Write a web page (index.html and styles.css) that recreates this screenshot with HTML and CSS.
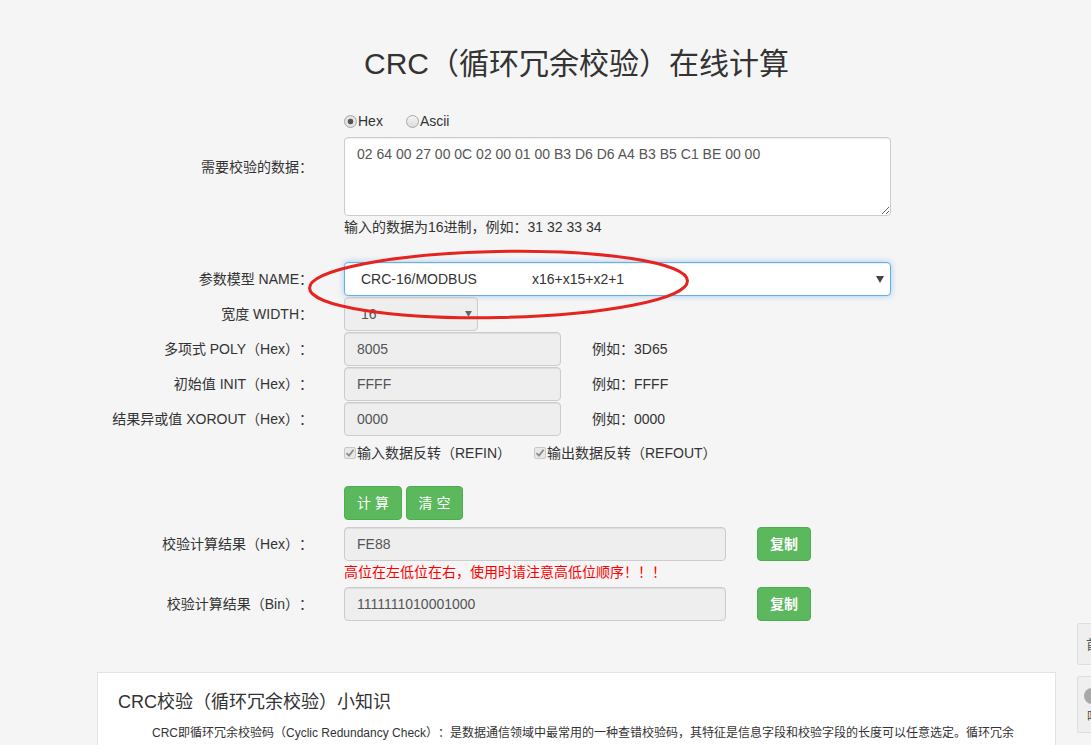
FILE: index.html
```html
<!DOCTYPE html>
<html lang="zh-CN">
<head>
<meta charset="utf-8">
<title>CRC（循环冗余校验）在线计算</title>
<link rel="stylesheet" href="styles.css">
</head>
<body>
<div class="page">
  <h1 class="title">CRC（循环冗余校验）在线计算</h1>
  <form class="form">
    <div class="row row-radio">
      <div class="label"></div>
      <div class="radios">
        <label class="radio"><input type="radio" name="fmt" checked>Hex</label>
        <label class="radio"><input type="radio" name="fmt">Ascii</label>
      </div>
    </div>
    <div class="row row-data">
      <label class="label label-top">需要校验的数据：</label>
      <div class="ctrl">
        <textarea class="input textarea">02 64 00 27 00 0C 02 00 01 00 B3 D6 D6 A4 B3 B5 C1 BE 00 00</textarea>
        <div class="help">输入的数据为16进制，例如：31 32 33 34</div>
      </div>
    </div>
    <div class="row row-name">
      <label class="label">参数模型 NAME：</label>
      <div class="select select-name">
        <span class="opt-name">CRC-16/MODBUS</span><span class="opt-poly">x16+x15+x2+1</span>
        <svg class="arrow" width="8" height="7" viewBox="0 0 8 7"><path d="M0 0H8L4 7Z" fill="#444"/></svg>
      </div>
    </div>
    <div class="row row-tight">
      <label class="label">宽度 WIDTH：</label>
      <div class="select select-width disabled">
        <span class="opt-name">16</span>
        <svg class="arrow" width="7" height="6" viewBox="0 0 8 7"><path d="M0 0H8L4 7Z" fill="#666"/></svg>
      </div>
    </div>
    <div class="row row-tight">
      <label class="label">多项式 POLY（Hex）：</label>
      <input class="input input-short" value="8005" readonly>
      <span class="example">例如：3D65</span>
    </div>
    <div class="row row-tight">
      <label class="label">初始值 INIT（Hex）：</label>
      <input class="input input-short" value="FFFF" readonly>
      <span class="example">例如：FFFF</span>
    </div>
    <div class="row row-tight">
      <label class="label">结果异或值 XOROUT（Hex）：</label>
      <input class="input input-short" value="0000" readonly>
      <span class="example">例如：0000</span>
    </div>
    <div class="row row-checks">
      <div class="label"></div>
      <label class="check"><span class="cbox"><svg width="10" height="10" viewBox="0 0 10 10"><path d="M1.5 5.2L4 7.6L8.6 1.8" fill="none" stroke="#8a8a8a" stroke-width="1.8"/></svg></span>输入数据反转（REFIN）</label>
      <label class="check check-2"><span class="cbox"><svg width="10" height="10" viewBox="0 0 10 10"><path d="M1.5 5.2L4 7.6L8.6 1.8" fill="none" stroke="#8a8a8a" stroke-width="1.8"/></svg></span>输出数据反转（REFOUT）</label>
    </div>
    <div class="row row-buttons">
      <div class="label"></div>
      <button type="button" class="btn btn-calc">计 算</button>
      <button type="button" class="btn btn-clear">清 空</button>
    </div>
    <div class="row row-result">
      <label class="label">校验计算结果（Hex）：</label>
      <input class="input input-result" value="FE88" readonly>
      <button type="button" class="btn btn-copy">复制</button>
    </div>
    <div class="row row-warn">
      <div class="label"></div>
      <div class="warn">高位在左低位在右，使用时请注意高低位顺序！！！</div>
    </div>
    <div class="row row-result2">
      <label class="label">校验计算结果（Bin）：</label>
      <input class="input input-result" value="1111111010001000" readonly>
      <button type="button" class="btn btn-copy">复制</button>
    </div>
  </form>

  <svg class="mark" width="400" height="90" viewBox="0 0 400 90">
    <ellipse cx="198.5" cy="44.5" rx="189" ry="33" transform="rotate(-1.1 198.5 44.5)" fill="none" stroke="#e52420" stroke-width="3"/>
  </svg>

  <div class="card">
    <h3 class="card-title">CRC校验（循环冗余校验）小知识</h3>
    <p class="card-text">CRC即循环冗余校验码（Cyclic Redundancy Check）：是数据通信领域中最常用的一种查错校验码，其特征是信息字段和校验字段的长度可以任意选定。循环冗余检查（CRC）是一种数据传输检错功能，对数据进行多项式计算，并将得到的结果附在帧的后面，接收设备也执行类似的算法，以保证数据传输的正确性和完整性。</p>
  </div>
</div>

<div class="side side-top">首</div>
<div class="side side-bottom"><span class="side-icon"></span><span class="side-text">吗</span></div>
</body>
</html>
```

FILE: styles.css
```css
* { box-sizing: border-box; }
html, body { margin: 0; padding: 0; }
body {
  background: #f5f5f5;
  font-family: "Liberation Sans", "Noto Sans CJK SC", sans-serif;
  font-size: 14px;
  line-height: 20px;
  color: #333;
  overflow: hidden;
  text-spacing-trim: space-all;
}
.page {
  position: relative;
  width: 959px;
  margin-left: 97px;
  padding-top: 47px;
}
.title {
  margin: 0;
  font-size: 30px;
  line-height: 33px;
  font-weight: normal;
  text-align: center;
  color: #333;
}
.form { margin-top: 31px; }
.row { display: flex; align-items: center; }
.label {
  width: 216px;
  flex: none;
  text-align: right;
  margin-right: 31px;
  color: #333;
}
.label-top { align-self: flex-start; padding-top: 20px; }
.ctrl { display: flex; flex-direction: column; }

/* radios */
.radios { display: flex; height: 20px; align-items: center; }
.radio { display: flex; align-items: center; margin-right: 23px; }
.radio input {
  appearance: none;
  -webkit-appearance: none;
  width: 13px; height: 13px;
  margin: 0 1px 0 0;
  border: 1px solid #a8a8a8;
  border-radius: 50%;
  background: linear-gradient(#f4f4f4, #dcdcdc);
  position: relative;
}
.radio input:checked {
  background: radial-gradient(circle, #555 0 2.5px, #e6e6e6 3.2px, #dadada 100%);
}

/* textarea */
.input {
  font-family: "Liberation Sans", "Noto Sans CJK SC", sans-serif;
  font-size: 14px;
  line-height: 20px;
  color: #555;
  border: 1px solid #ccc;
  border-radius: 4px;
  padding: 6px 12px;
  height: 34px;
  background: #eee;
  box-shadow: inset 0 1px 1px rgba(0,0,0,.075);
  outline: none;
}
.row-data { margin-top: 6px; }
.textarea {
  width: 547px;
  height: 79px;
  background: #fff;
  resize: vertical;
  display: block;
  margin: 0;
}
.help { margin-top: 1px; color: #333; }

/* selects */
.select {
  display: flex;
  align-items: center;
  height: 34px;
  border: 1px solid #ccc;
  border-radius: 4px;
  padding: 0 0 0 16px;
  color: #555;
  position: relative;
}
.row-name { margin-top: 25px; }
.select-name {
  width: 547px;
  background: #fff;
  border-color: #66afe9;
  box-shadow: inset 0 1px 1px rgba(0,0,0,.075), 0 0 6px rgba(102,175,233,.6);
  color: #333;
}
.opt-poly { margin-left: 55px; }
.select .arrow { margin-left: auto; margin-right: 6px; }
.select-width {
  width: 134px;
  background: #eee;
  box-shadow: inset 0 1px 1px rgba(0,0,0,.075);
}
.select-width .arrow { margin-right: 5px; }
.row-tight { margin-top: 1px; }
.input-short { width: 217px; }
.example { margin-left: 31px; color: #333; }

/* checkboxes */
.row-checks { margin-top: 7px; height: 20px; }
.check { display: flex; align-items: center; color: #333; }
.check-2 { margin-left: 23px; }
.cbox {
  width: 12px; height: 12px;
  border: 1px solid #c8c8c8;
  border-radius: 2px;
  background: #e8e8e8;
  display: flex; align-items: center; justify-content: center;
  margin-right: 1px;
}

/* buttons */
.btn {
  font-family: "Liberation Sans", "Noto Sans CJK SC", sans-serif;
  font-size: 14px;
  line-height: 20px;
  height: 34px;
  padding: 6px 12px;
  border: 1px solid #4cae4c;
  border-radius: 4px;
  background: #5cb85c;
  color: #fff;
  cursor: pointer;
}
.row-buttons { margin-top: 23px; }
.btn-calc { width: 58px; padding: 0; }
.btn-clear { width: 57px; padding: 0; margin-left: 4px; }
.row-result { margin-top: 7px; }
.input-result { width: 382px; }
.btn-copy { width: 54px; padding: 0; margin-left: 31px; font-weight: bold; }
.row-warn { margin-top: 1px; }
.warn { color: #f00; }
.row-result2 { margin-top: 5px; }

/* annotation ellipse */
.mark {
  position: absolute;
  left: 203px;
  top: 240px;
  pointer-events: none;
}

/* card */
.card {
  margin-top: 51px;
  background: #fff;
  border: 1px solid #e3e3e3;
  padding: 19px 30px 20px 20px;
}
.card-title {
  margin: 0;
  font-size: 18px;
  line-height: 20px;
  font-weight: normal;
  color: #333;
}
.card-text {
  margin: 8px 0 0;
  font-size: 12px;
  line-height: 26px;
  text-indent: 34px;
  color: #333;
}

/* side widgets */
.side {
  position: fixed;
  left: 1077px;
  width: 40px;
  background: #efefef;
  border: 1px solid #dedede;
  border-radius: 2px;
  color: #555;
  font-size: 13px;
}
.side-top { top: 623px; height: 42px; line-height: 42px; padding-left: 8px; }
.side-bottom { top: 676px; height: 57px; padding-left: 6px; }
.side-icon {
  display: block;
  width: 16px; height: 16px;
  margin-top: 11px;
  border-radius: 50%;
  background: #a9a9a9;
}
.side-text { display: block; margin-top: 5px; padding-left: 3px; line-height: 16px; }
```
